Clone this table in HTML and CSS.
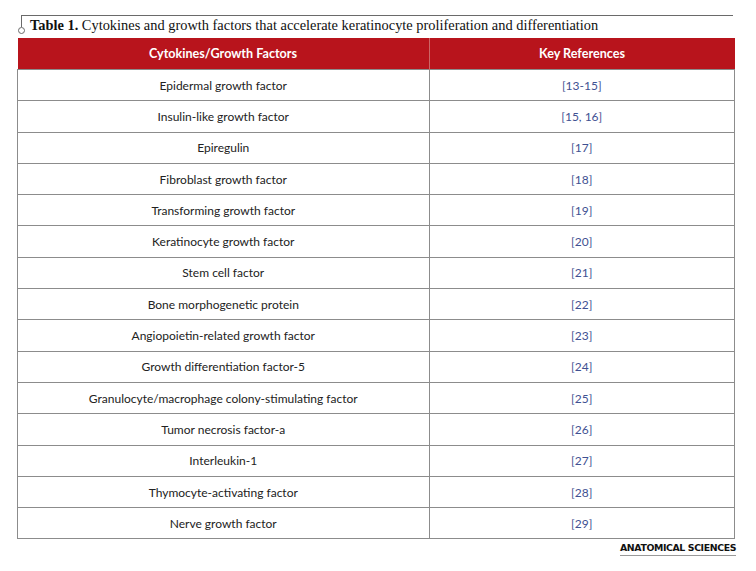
FILE: index.html
```html
<!DOCTYPE html>
<html>
<head>
<meta charset="utf-8">
<link rel="stylesheet" href="styles.css">
</head>
<body>
<div class="page">
  <div class="caption">
    <div class="marker"><span class="stem"></span><span class="dot"></span></div>
    <p class="caption-text"><b>Table 1.</b> Cytokines and growth factors that accelerate keratinocyte proliferation and differentiation</p>
  </div>
  <table class="data">
    <thead>
      <tr><th>Cytokines/Growth Factors</th><th>Key References</th></tr>
    </thead>
    <tbody>
      <tr><td>Epidermal growth factor</td><td class="ref">[13-15]</td></tr>
      <tr><td>Insulin-like growth factor</td><td class="ref">[15, 16]</td></tr>
      <tr><td>Epiregulin</td><td class="ref">[17]</td></tr>
      <tr><td>Fibroblast growth factor</td><td class="ref">[18]</td></tr>
      <tr><td>Transforming growth factor</td><td class="ref">[19]</td></tr>
      <tr><td>Keratinocyte growth factor</td><td class="ref">[20]</td></tr>
      <tr><td>Stem cell factor</td><td class="ref">[21]</td></tr>
      <tr><td>Bone morphogenetic protein</td><td class="ref">[22]</td></tr>
      <tr><td>Angiopoietin-related growth factor</td><td class="ref">[23]</td></tr>
      <tr><td>Growth differentiation factor-5</td><td class="ref">[24]</td></tr>
      <tr><td>Granulocyte/macrophage colony-stimulating factor</td><td class="ref">[25]</td></tr>
      <tr><td>Tumor necrosis factor-a</td><td class="ref">[26]</td></tr>
      <tr><td>Interleukin-1</td><td class="ref">[27]</td></tr>
      <tr><td>Thymocyte-activating factor</td><td class="ref">[28]</td></tr>
      <tr><td>Nerve growth factor</td><td class="ref">[29]</td></tr>
    </tbody>
  </table>
  <div class="footer">
    <span class="logo">ANATOMICAL SCIENCES</span>
  </div>
</div>
</body>
</html>
```

FILE: styles.css
```css
html, body {
  margin: 0;
  padding: 0;
  background: #ffffff;
}

.page {
  width: 756px;
  height: 571px;
  padding: 15px 21px 0 17px;
  box-sizing: border-box;
}

.caption {
  display: flex;
  align-items: flex-start;
  border-top: 1px solid #6a6a6a;
  margin-left: 4px;
  margin-right: 2px;
  height: 22px;
}

.marker {
  width: 7px;
  margin-left: -3px;
  display: flex;
  flex-direction: column;
  align-items: center;
}

.stem {
  width: 1px;
  height: 11px;
  background: #6a6a6a;
}

.dot {
  width: 5px;
  height: 5px;
  border: 1px solid #6a6a6a;
  border-radius: 50%;
  background: #fff;
}

.caption-text {
  margin: 0 0 0 5px;
  padding-top: 1px;
  font-family: "Liberation Serif", "DejaVu Serif", serif;
  font-size: 14.4px;
  line-height: 16px;
  color: #111;
  white-space: nowrap;
}

.data {
  width: 718px;
  border-collapse: collapse;
  table-layout: fixed;
  font-family: Lato, "Open Sans", sans-serif;
  font-size: 12px;
  color: #222;
}

.data th {
  height: 31px;
  background: #b8141c;
  color: #ffffff;
  font-weight: 700;
  font-size: 12.6px;
  border-left: 1px solid #c66;
  padding: 0;
}

.data th:first-child {
  width: 411px;
  border-left: none;
}

.data td {
  height: 30.3px;
  padding: 0;
  text-align: center;
  border: 1px solid #8c8c8c;
}

.data td.ref {
  color: #3f5192;
}

.footer {
  display: flex;
  justify-content: flex-end;
  margin-top: 3px;
  margin-right: -1px;
}

.logo {
  font-family: "DejaVu Sans", sans-serif;
  font-weight: 700;
  font-size: 9.4px;
  letter-spacing: -0.4px;
  color: #111;
  border-bottom: 1px solid #999;
  padding-bottom: 1px;
  line-height: 12px;
}
```
